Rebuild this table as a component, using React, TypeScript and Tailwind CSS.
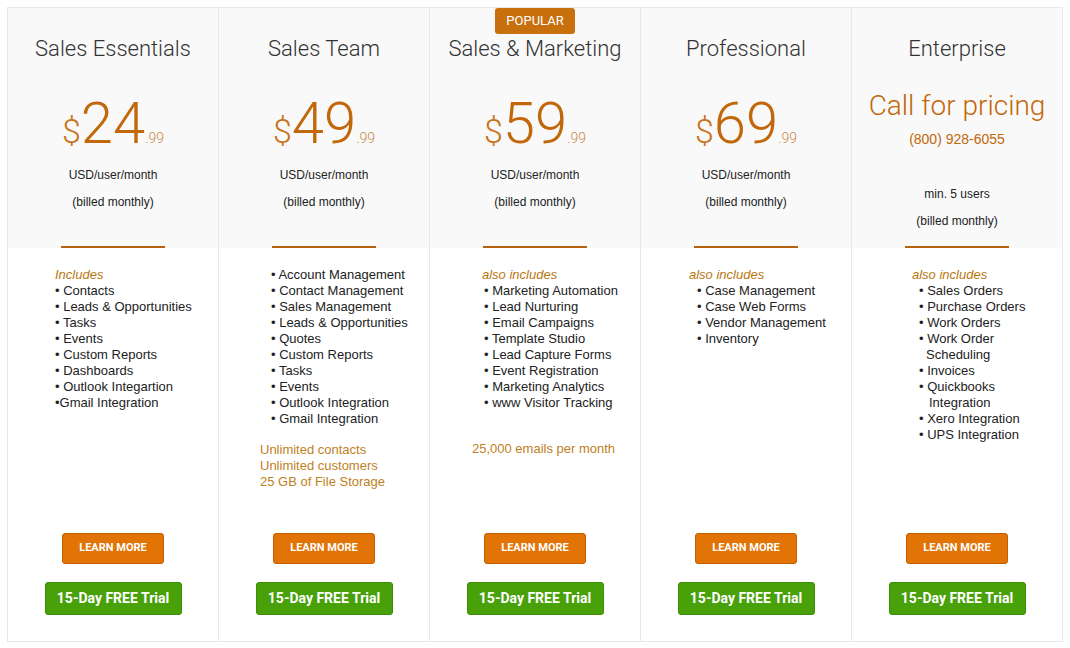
type Line = string | { t: string; cls: string };

interface Plan {
  name: string;
  price?: string;
  heading?: string;
  headPad: string;
  itemPad: string;
  items: Line[];
  extra?: string[];
  extraCls?: string;
  popular?: boolean;
}

const plans: Plan[] = [
  {
    name: "Sales Essentials",
    price: "24",
    heading: "Includes",
    headPad: "pl-[47px]",
    itemPad: "pl-[47px]",
    items: [
      "• Contacts",
      "• Leads & Opportunities",
      "• Tasks",
      "• Events",
      "• Custom Reports",
      "• Dashboards",
      "• Outlook Integartion",
      "•Gmail Integration",
    ],
  },
  {
    name: "Sales Team",
    price: "49",
    headPad: "pl-[52px]",
    itemPad: "pl-[52px]",
    items: [
      "• Account Management",
      "• Contact Management",
      "• Sales Management",
      "• Leads & Opportunities",
      "• Quotes",
      "• Custom Reports",
      "• Tasks",
      "• Events",
      "• Outlook Integration",
      "• Gmail Integration",
    ],
    extra: ["Unlimited contacts", "Unlimited customers", "25 GB of File Storage"],
    extraCls: "mt-[15px] pl-[41px]",
  },
  {
    name: "Sales & Marketing",
    price: "59",
    heading: "also includes",
    headPad: "pl-[52px]",
    itemPad: "pl-[54px]",
    popular: true,
    items: [
      "• Marketing Automation",
      "• Lead Nurturing",
      "• Email Campaigns",
      "• Template Studio",
      "• Lead Capture Forms",
      "• Event Registration",
      "• Marketing Analytics",
      "• www Visitor Tracking",
    ],
    extra: ["25,000 emails per month"],
    extraCls: "mt-[30px] pl-[42px]",
  },
  {
    name: "Professional",
    price: "69",
    heading: "also includes",
    headPad: "pl-[48px]",
    itemPad: "pl-[56px]",
    items: ["• Case Management", "• Case Web Forms", "• Vendor Management", "• Inventory"],
  },
  {
    name: "Enterprise",
    heading: "also includes",
    headPad: "pl-[60px]",
    itemPad: "pl-[67px]",
    items: [
      "• Sales Orders",
      "• Purchase Orders",
      "• Work Orders",
      "• Work Order",
      { t: "Scheduling", cls: "pl-[7px]" },
      "• Invoices",
      "• Quickbooks",
      { t: "Integration", cls: "pl-[10px]" },
      "• Xero Integration",
      "• UPS Integration",
    ],
  },
];

const roboto = "font-['Roboto',sans-serif]";
const arial = "font-['Liberation_Sans',Arial,sans-serif]";

const PlanColumn = ({ plan }: { plan: Plan }) => {
  return (
    <div className="relative flex h-[633px] flex-col border-r border-[#e8e8e8]">
      {plan.popular && (
        <div
          className={`absolute left-1/2 top-0 flex h-[26px] w-[80px] -translate-x-1/2 items-center justify-center rounded-[3px] bg-[#c8700e] text-[13px] text-white ${roboto}`}
        >
          POPULAR
        </div>
      )}

      <div className="flex h-[240px] flex-col items-center bg-[#f9f9f9] pt-[26px]">
        <h2 className={`text-[22px] font-light leading-[29px] text-[#333] ${roboto}`}>{plan.name}</h2>

        {plan.price ? (
          <>
            <div className={`mt-[31px] flex items-baseline leading-none text-[#c2670a] ${roboto}`}>
              <span className="text-[34px] font-light text-[#c8731c]">$</span>
              <span className="text-[58px] font-light">{plan.price}</span>
              <span className="text-[14px] font-light text-[#c98a4a]">.99</span>
            </div>
            <p className={`mt-[15px] text-[12px] leading-[16px] text-[#222] ${arial}`}>USD/user/month</p>
            <p className={`mt-[11px] text-[12px] leading-[16px] text-[#222] ${arial}`}>(billed monthly)</p>
          </>
        ) : (
          <>
            <p className={`mt-[26px] text-[28px] font-light leading-[34px] text-[#c2670a] ${roboto}`}>
              Call for pricing
            </p>
            <p className={`mt-[7px] text-[14px] leading-[18px] text-[#c2670a] ${arial}`}>(800) 928-6055</p>
            <p className={`mt-[38px] text-[12px] leading-[16px] text-[#222] ${arial}`}>min. 5 users</p>
            <p className={`mt-[11px] text-[12px] leading-[16px] text-[#222] ${arial}`}>(billed monthly)</p>
          </>
        )}

        <div className="mt-auto h-[2px] w-[104px] bg-[#b8620e]" />
      </div>

      <div className={`pt-[19px] text-[13px] leading-[16px] text-[#222] ${arial}`}>
        {plan.heading && <p className={`${plan.headPad} italic text-[#b8770e]`}>{plan.heading}</p>}
        <div className={plan.itemPad}>
          {plan.items.map((item, i) =>
            typeof item === "string" ? (
              <p key={i}>{item}</p>
            ) : (
              <p key={i} className={item.cls}>
                {item.t}
              </p>
            )
          )}
        </div>
        {plan.extra && (
          <div className={`${plan.extraCls} text-[#c0801e]`}>
            {plan.extra.map((e) => (
              <p key={e}>{e}</p>
            ))}
          </div>
        )}
      </div>

      <div className={`mt-auto flex flex-col items-center pb-[26px] ${roboto}`}>
        <button className="h-[31px] w-[102px] rounded-[3px] border border-[#c65e00] bg-[#e27406] text-[11px] font-bold text-white">
          LEARN MORE
        </button>
        <button className="mt-[18px] h-[33px] w-[137px] rounded-[3px] border border-[#3d8c06] bg-[#48a109] text-[14px] font-bold text-white">
          15-Day FREE Trial
        </button>
      </div>
    </div>
  );
};

export default function App() {
  return (
    <div className="min-h-screen bg-white p-[7px]">
      <div className="grid grid-cols-5 border-y border-l border-[#e8e8e8]">
        {plans.map((plan) => (
          <PlanColumn key={plan.name} plan={plan} />
        ))}
      </div>
    </div>
  );
}
